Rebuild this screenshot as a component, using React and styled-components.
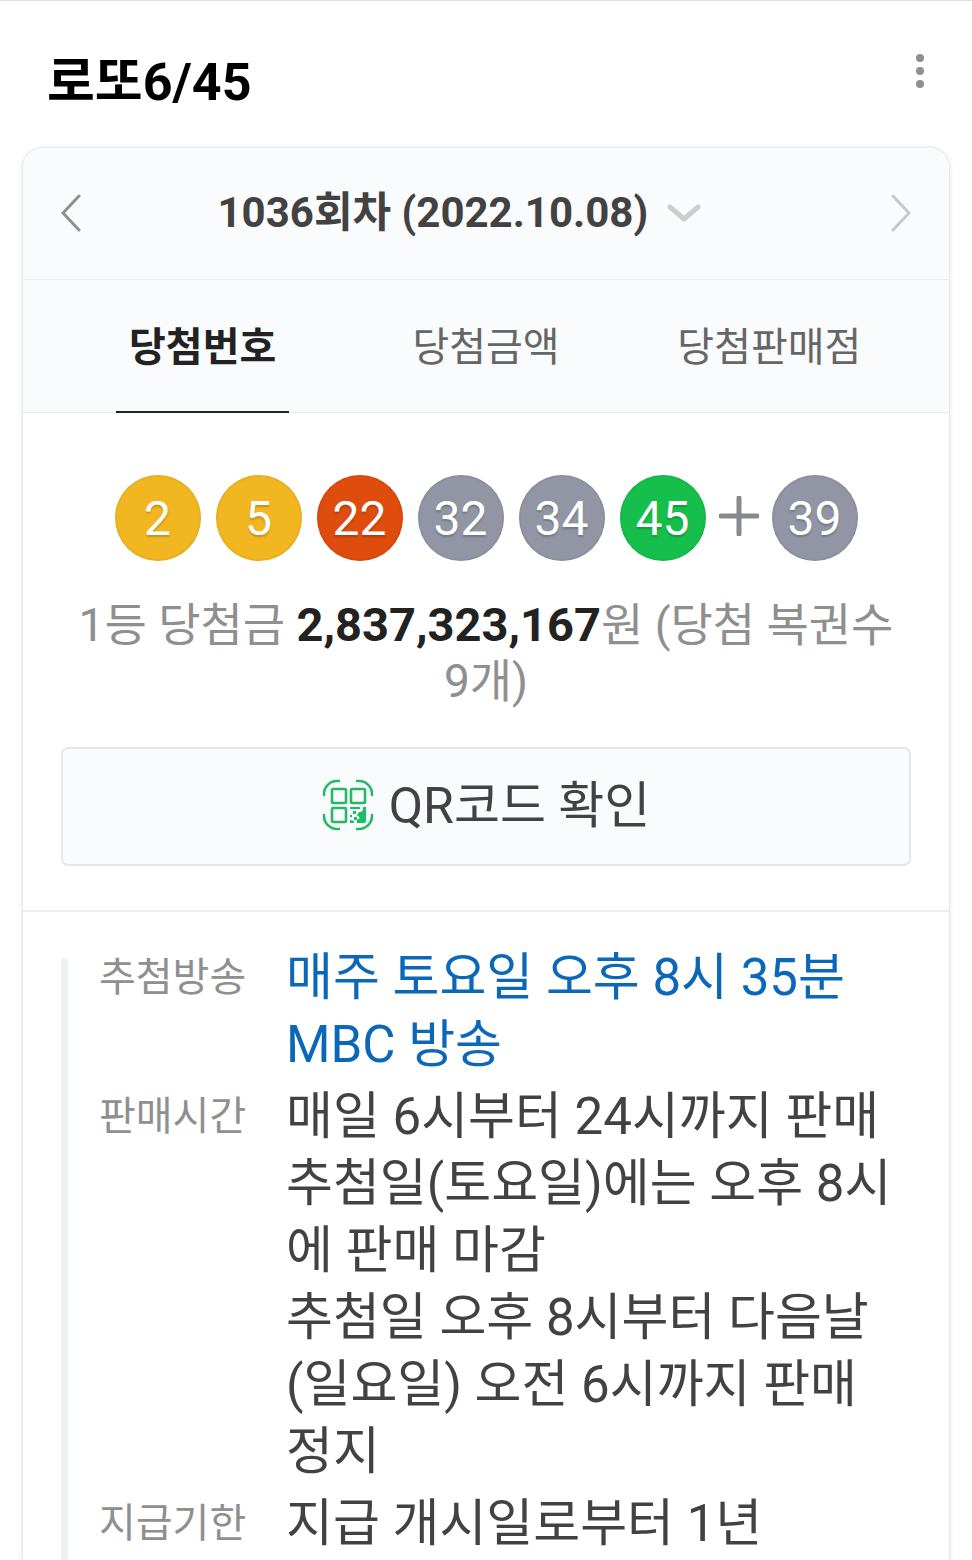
import styled, { createGlobalStyle } from "styled-components";

const balls = [
  { number: 2, color: "#f2b621" },
  { number: 5, color: "#f2b621" },
  { number: 22, color: "#de4c0e" },
  { number: 32, color: "#9195a4" },
  { number: 34, color: "#9195a4" },
  { number: 45, color: "#16bf4b" },
];

const tabs = ["당첨번호", "당첨금액", "당첨판매점"];

export default function App() {
  return (
    <Page>
      <GlobalStyle />
      <Header>
        <Title>로또6/45</Title>
        <MoreButton type="button" aria-label="더보기">
          <svg width="10" height="36" viewBox="0 0 10 36" fill="#8f8f8f">
            <circle cx="5" cy="5" r="4" />
            <circle cx="5" cy="18" r="4" />
            <circle cx="5" cy="31" r="4" />
          </svg>
        </MoreButton>
      </Header>

      <Card>
        <RoundBar>
          <ArrowButton type="button" aria-label="이전 회차" $color="#8f8f8f">
            <svg width="20" height="38" viewBox="0 0 20 38">
              <path d="M18 2 2 19l16 17" />
            </svg>
          </ArrowButton>
          <RoundPicker>
            <RoundSelect aria-label="회차 선택" defaultValue="1036">
              <option value="1036">1036회차 (2022.10.08)</option>
            </RoundSelect>
            <svg width="34" height="20" viewBox="0 0 34 20">
              <path d="M3 4l14 12L31 4" />
            </svg>
          </RoundPicker>
          <ArrowButton type="button" aria-label="다음 회차" $color="#c6c8ca">
            <svg width="20" height="38" viewBox="0 0 20 38">
              <path d="M2 2l16 17L2 36" />
            </svg>
          </ArrowButton>
        </RoundBar>

        <Tabs role="tablist">
          {tabs.map((tab, i) => (
            <Tab key={tab} type="button" role="tab" aria-selected={i === 0} $active={i === 0}>
              {tab}
            </Tab>
          ))}
        </Tabs>

        <Result>
          <Balls>
            {balls.map((ball) => (
              <Ball key={ball.number} $color={ball.color}>{ball.number}</Ball>
            ))}
            <PlusIcon width="40" height="40" viewBox="0 0 40 40" role="img" aria-label="보너스">
              <path d="M20 2v36M2 20h36" />
            </PlusIcon>
            <Ball $color="#9195a4">39</Ball>
          </Balls>
          <Prize>
            1등 당첨금 <strong>2,837,323,167</strong>원 (당첨 복권수 9개)
          </Prize>
          <QrButton type="button">
            <QrIcon />
            <span>QR코드 확인</span>
          </QrButton>
        </Result>

        <Info>
          <InfoList>
            <dt>추첨방송</dt>
            <dd><a href="#broadcast">매주 토요일 오후 8시 35분 MBC 방송</a></dd>
            <dt>판매시간</dt>
            <dd>
              매일 6시부터 24시까지 판매<br />
              추첨일(토요일)에는 오후 8시에 판매 마감<br />
              추첨일 오후 8시부터 다음날(일요일) 오전 6시까지 판매 정지
            </dd>
            <dt>지급기한</dt>
            <dd>지급 개시일로부터 1년</dd>
          </InfoList>
        </Info>
      </Card>
    </Page>
  );
}

function QrIcon() {
  return (
    <svg width="52" height="52" viewBox="0 0 52 52" fill="none" stroke="#27b866" strokeWidth="2.6">
      <path
        strokeLinecap="round"
        d="M2 16v-1A13 13 0 0 1 15 2h2M35 2h2a13 13 0 0 1 13 13v1M50 36v1a13 13 0 0 1-13 13h-2M17 50h-2A13 13 0 0 1 2 37v-1"
      />
      <rect x="10" y="10" width="14" height="14" rx="1" />
      <rect x="29" y="10" width="14" height="14" rx="1" />
      <rect x="10" y="29" width="14" height="14" rx="1" />
      <path
        fill="#16c060"
        stroke="none"
        d="M28 28h10v2H28zM41 28h3v14a2 2 0 0 1-2 2h-7v-3l3-2-3-3 2-3h2l2-2zM28 41l4 1v2h-4zM31 32h3v3h-3zM32 38h3v3h-3zM28 36h2v2h-2z"
      />
    </svg>
  );
}

const GlobalStyle = createGlobalStyle`
  * {
    box-sizing: border-box;
  }
  body {
    margin: 0;
    background: #fff;
    color: #424242;
    font-family: Roboto, "Noto Sans CJK KR", sans-serif;
  }
  button, select {
    margin: 0;
    padding: 0;
    border: 0;
    background: none;
    color: inherit;
    font-family: inherit;
    cursor: pointer;
  }
  svg {
    display: block;
  }
`;

const Page = styled.div`
  display: flex;
  flex-direction: column;
  min-height: 100vh;
  overflow: hidden;
  border-top: 1px solid #e0e0e0;
`;

const Header = styled.header`
  display: flex;
  justify-content: space-between;
  align-items: flex-start;
  padding: 48px 47px 31px;
`;

const Title = styled.h1`
  margin: 0;
  color: #000;
  font-size: 52px;
  font-weight: 700;
  line-height: 68px;
`;

const MoreButton = styled.button`
  padding-top: 4px;
`;

const Card = styled.section`
  display: flex;
  flex: 1;
  flex-direction: column;
  margin: 0 23px;
  border-radius: 20px 20px 0 0;
  background: #fff;
  box-shadow: 0 0 3px 1px rgba(0, 20, 60, 0.11), 0 2px 8px rgba(0, 20, 60, 0.05);
`;

const RoundBar = styled.div`
  display: flex;
  justify-content: space-between;
  align-items: center;
  height: 132px;
  padding: 0 38px 2px;
  border-bottom: 1px solid #e9ecef;
  border-radius: 20px 20px 0 0;
  background: #fafbfd;
`;

const ArrowButton = styled.button`
  path {
    fill: none;
    stroke: ${({ $color }) => $color};
    stroke-width: 3;
    stroke-linecap: round;
  }
`;

const RoundPicker = styled.div`
  position: relative;
  padding-right: 54px;

  svg {
    position: absolute;
    top: 50%;
    right: 54px;
    margin-top: -10px;
    pointer-events: none;
  }
  path {
    fill: none;
    stroke: #cbced1;
    stroke-width: 5;
    stroke-linecap: round;
    stroke-linejoin: round;
  }
`;

const RoundSelect = styled.select`
  appearance: none;
  height: 60px;
  padding-right: 52px;
  color: #424242;
  font-size: 42px;
  font-weight: 700;
`;

const Tabs = styled.div`
  display: grid;
  grid-template-columns: repeat(3, 1fr);
  justify-items: center;
  height: 133px;
  padding: 0 38px;
  border-bottom: 1px solid #e9ecef;
  background: #fafbfd;
`;

const Tab = styled.button`
  height: 133px;
  padding: 0 13px 4px;
  border-bottom: 2px solid ${({ $active }) => ($active ? "#222" : "transparent")};
  color: ${({ $active }) => ($active ? "#222" : "#666")};
  font-size: 40px;
  font-weight: ${({ $active }) => ($active ? 700 : 400)};
  white-space: nowrap;
`;

const Result = styled.div`
  padding: 62px 38px 44px;
  border-bottom: 2px solid #eceff1;
`;

const Balls = styled.div`
  display: flex;
  justify-content: center;
  align-items: center;
  gap: 15px;
`;

const Ball = styled.span`
  width: 86px;
  height: 86px;
  border-radius: 50%;
  background: ${({ $color }) => $color};
  box-shadow: inset 0 0 2px 1px rgba(0, 0, 0, 0.08);
  color: #fff;
  font-size: 48px;
  line-height: 88px;
  text-align: center;
  text-shadow: 0 2px 2px rgba(0, 0, 0, 0.2);
`;

const PlusIcon = styled.svg`
  margin: 0 -2px 5px;
  fill: none;
  stroke: #868a8e;
  stroke-width: 5;
  stroke-linecap: round;
`;

const Prize = styled.p`
  margin: 36px 0 0;
  color: #8f8f8f;
  font-size: 46px;
  line-height: 56px;
  text-align: center;
  word-break: keep-all;

  strong {
    color: #222;
    font-size: 47px;
    font-weight: 700;
  }
`;

const QrButton = styled.button`
  display: flex;
  justify-content: center;
  align-items: center;
  gap: 15px;
  width: 100%;
  height: 119px;
  margin-top: 38px;
  padding-bottom: 4px;
  border: 2px solid #e3e6ea;
  border-radius: 7px;
  background: #fafbfd;
  color: #424242;
  font-size: 50px;

  span {
    padding-bottom: 8px;
  }
`;

const Info = styled.div`
  display: flex;
  flex: 1;
  padding: 32px 38px 0;

  &::before {
    content: "";
    width: 7px;
    margin-top: 14px;
    border-radius: 4px 4px 0 0;
    background: #edf1f4;
  }
`;

const InfoList = styled.dl`
  display: grid;
  flex: 1;
  grid-template-columns: 187px 1fr;
  align-content: start;
  row-gap: 5px;
  margin: 0 0 0 31px;
  line-height: 67px;

  dt {
    color: #8f8f8f;
    font-size: 40px;
  }
  dd {
    margin: 0;
    font-size: 51px;
  }
  a {
    color: #0b67b7;
    text-decoration: none;
  }
`;
